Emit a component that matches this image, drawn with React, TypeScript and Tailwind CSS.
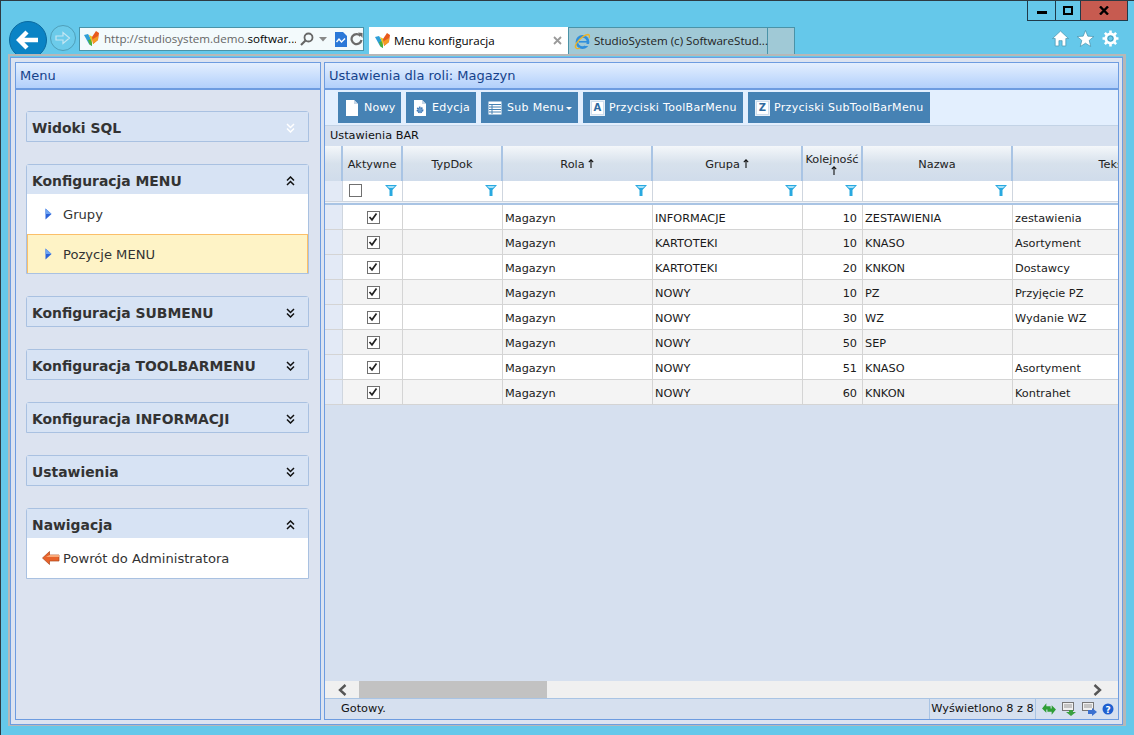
import React from "react";

const F = "font-['DejaVu_Sans','Liberation_Sans',sans-serif]";

function Logo({ s = 16 }: { s?: number }) {
  return (
    <svg width={s} height={s} viewBox="0 0 16 16" className="shrink-0">
      <path d="M0 4 L4 3 L7 8 L8 15 L5 13 Z" fill="#2f9fd8" />
      <path d="M4 9 L8 8 L8 15 L5.5 13.5 Z" fill="#4caf3c" />
      <path d="M5 4 L9 6 L8 12 Z" fill="#e9c320" />
      <path d="M8 6 L12 0 L15 2 L14 9 L9 13 Z" fill="#e8591c" />
      <path d="M9 8 L14 5 L14 9 L9 13 Z" fill="#f59a23" />
    </svg>
  );
}

function IEIcon() {
  return (
    <svg width={17} height={17} viewBox="0 0 17 17" className="shrink-0">
      <circle cx="8.5" cy="9" r="5.6" fill="none" stroke="#2f8fdc" strokeWidth="2.6" />
      <rect x="5" y="8" width="8" height="1.6" fill="#2f8fdc" />
      <path d="M11 11 L15 11 L15 13 L11 13 Z" fill="#a0c7d6" />
      <path d="M2 14 C0 11 9 2 14 1.5 C16 1.5 15.5 4 15 5" fill="none" stroke="#eab32a" strokeWidth="1.3" />
      <path d="M1.5 12 C0.5 16 4 16 6 15" fill="none" stroke="#eab32a" strokeWidth="1.3" />
    </svg>
  );
}

function Filter() {
  return (
    <svg width={12} height={11} viewBox="0 0 12 11" className="shrink-0 mb-[2px]">
      <path d="M0 0 H12 L7.5 5 V11 H4.5 V5 Z" fill="#29a9e0" />
      <path d="M2 1 H10 L8 3 H4 Z" fill="#a5e0f7" />
    </svg>
  );
}

function SortUp() {
  return (
    <svg width={6} height={9} viewBox="0 0 6 9" className="inline-block ml-[3px] align-baseline">
      <path d="M3 9 V1 M0.8 3.2 L3 0.8 L5.2 3.2" stroke="#111" strokeWidth="1.1" fill="none" />
    </svg>
  );
}

function Chevrons({ up, color = "#111" }: { up?: boolean; color?: string }) {
  return (
    <svg width={9} height={10} viewBox="0 0 9 10" className="shrink-0 mt-[2px]">
      <path
        d={up ? "M1 4.5 L4.5 1 L8 4.5 M1 9 L4.5 5.5 L8 9" : "M1 1 L4.5 4.5 L8 1 M1 5.5 L4.5 9 L8 5.5"}
        stroke={color}
        strokeWidth="1.5"
        fill="none"
      />
    </svg>
  );
}

function Check({ on }: { on: boolean }) {
  return (
    <span className="w-[13px] h-[13px] border border-[#707070] bg-white flex items-center justify-center shrink-0">
      {on && (
        <svg width={10} height={10} viewBox="0 0 10 10">
          <path d="M1.5 5 L4 7.8 L8.5 1.5" stroke="#222" strokeWidth="1.7" fill="none" />
        </svg>
      )}
    </span>
  );
}

function Tri() {
  return (
    <svg width={7} height={12} viewBox="0 0 7 12" className="shrink-0">
      <path d="M0.5 0.5 L6.5 6 L0.5 11.5 Z" fill="#2a62d8" />
      <path d="M0.5 0.5 L6.5 6 L0.5 6 Z" fill="#6fa4f2" />
    </svg>
  );
}

function AccHeader({ title, up, faint }: { title: string; up?: boolean; faint?: boolean }) {
  return (
    <div className="h-[29px] flex items-center justify-between pl-[5px] pr-[13px] bg-[#d7e3f4]">
      <span className="text-[13.9px] font-bold text-[#333] leading-none pt-[5px]">{title}</span>
      <Chevrons up={up} color={faint ? "#ffffff" : "#111"} />
    </div>
  );
}

function Acc({ title, up, faint, children, gap = true }: { title: string; up?: boolean; faint?: boolean; children?: React.ReactNode; gap?: boolean }) {
  return (
    <div className={`border border-[#a9c1e1] rounded-t-[3px] w-[283px] ${gap ? "mb-[22px]" : ""}`}>
      <AccHeader title={title} up={up} faint={faint} />
      {children}
    </div>
  );
}

function PanelHead({ text }: { text: string }) {
  return (
    <div className="h-[27px] shrink-0 border-b-2 border-[#6d9ce0] bg-gradient-to-b from-[#e4effe] to-[#b2d0fb] flex items-center pl-[4px] pt-[1px] text-[13px] text-[#15428b]">
      {text}
    </div>
  );
}

function DocIcon({ gear }: { gear?: boolean }) {
  return (
    <svg width={14} height={16} viewBox="0 0 14 16" className="shrink-0">
      <path d="M1 0 H9 L13 4 V16 H1 Z" fill="#fff" />
      <path d="M9 0 L13 4 H9 Z" fill="#c6d6e6" />
      {gear && <circle cx="7" cy="10" r="2.6" fill="#6f9fcf" stroke="#3f77b5" strokeWidth="1.6" strokeDasharray="1.4 0.8" />}
    </svg>
  );
}

function ListIcon() {
  return (
    <svg width={14} height={14} viewBox="0 0 14 14" className="shrink-0">
      <rect x="0.5" y="0.5" width="13" height="13" fill="#fff" />
      <path d="M1 3.5 H13 M1 6 H13 M1 8.5 H13 M1 11 H13 M4 3 V13" stroke="#4682b4" strokeWidth="1" />
    </svg>
  );
}

function LetterIcon({ l }: { l: string }) {
  return (
    <span className="w-[15px] h-[16px] border border-[#e8f0f8] bg-[#cfdeed] p-[1px] shrink-0 -mr-[1px]">
      <span className="w-full h-full bg-white text-[#2f6aa0] font-bold text-[10px] flex items-center justify-center leading-none">{l}</span>
    </span>
  );
}

function Btn({ w, icon, children }: { w: string; icon: React.ReactNode; children: React.ReactNode }) {
  return (
    <div className={`${w} h-[31px] bg-[#4682b4] text-white text-[11px] flex items-center pl-[7px] gap-[5px] tracking-[0.3px] shrink-0`}>
      {icon}
      <span className="flex items-center whitespace-nowrap pt-[1px]">{children}</span>
    </div>
  );
}

const cols = ["w-[60px]", "w-[100px]", "w-[150px]", "w-[150px]", "w-[60px]", "w-[150px]", "w-[202px]"];

const rows: [string, string, string, string][] = [
  ["INFORMACJE", "10", "ZESTAWIENIA", "zestawienia"],
  ["KARTOTEKI", "10", "KNASO", "Asortyment"],
  ["KARTOTEKI", "20", "KNKON", "Dostawcy"],
  ["NOWY", "10", "PZ", "Przyjęcie PZ"],
  ["NOWY", "30", "WZ", "Wydanie WZ"],
  ["NOWY", "50", "SEP", ""],
  ["NOWY", "51", "KNASO", "Asortyment"],
  ["NOWY", "60", "KNKON", "Kontrahet"],
];

function HeadCell({ w, children }: { w: string; children: React.ReactNode }) {
  return (
    <div className={`${w} shrink-0 border-r-2 border-[#a9c4e4] flex items-center justify-center text-center leading-[13px] pt-[1px] px-[2px] whitespace-nowrap overflow-hidden`}>
      {children}
    </div>
  );
}

function FilterCell({ w, children }: { w: string; children?: React.ReactNode }) {
  return (
    <div className={`${w} shrink-0 border-r border-[#cfd6df] flex items-center justify-end pr-[5px]`}>
      {children}
      <Filter />
    </div>
  );
}

function Cell({ w, right, children }: { w: string; right?: boolean; children?: React.ReactNode }) {
  return (
    <div className={`${w} shrink-0 border-r border-[#d4d4d4] flex items-center pt-[5px] px-[2px] whitespace-nowrap overflow-hidden ${right ? "justify-end pr-[5px]" : ""}`}>
      {children}
    </div>
  );
}

export default function App() {
  return (
    <div className={`w-[1134px] h-[735px] bg-[#65c8ea] border-t border-[#2d3a42] border-l border-l-[#2d3a42] flex flex-col overflow-hidden ${F}`}>
      {/* caption */}
      <div className="h-[20px] shrink-0 flex justify-end pr-[6px]">
        <div className="flex h-[20px] w-[101px] border border-t-0 border-[#1f3a4a] text-black">
          <div className="w-[28px] border-r border-[#1f3a4a] flex items-end justify-center pb-[6px]">
            <span className="w-[10px] h-[3px] bg-black" />
          </div>
          <div className="w-[25px] border-r border-[#1f3a4a] flex items-center justify-center">
            <span className="w-[10px] h-[9px] border-2 border-black" />
          </div>
          <div className="flex-1 bg-[#c75b50] flex items-center justify-center">
            <svg width={10} height={9} viewBox="0 0 10 9"><path d="M1 0.5 L9 8.5 M9 0.5 L1 8.5" stroke="#000" strokeWidth="2.4" /></svg>
          </div>
        </div>
      </div>
      {/* nav */}
      <div className="h-[33px] shrink-0 flex items-end pl-[8px] overflow-hidden">
        <div className="w-[38px] h-[38px] rounded-full bg-[#0a83c5] flex items-center justify-center shrink-0 mb-[-5px] border border-[#0a6aa0]">
          <svg width={24} height={20} viewBox="0 0 24 20"><path d="M22 10 H4 M11 2 L3 10 L11 18" stroke="#fff" strokeWidth="4.4" fill="none" /></svg>
        </div>
        <div className="w-[26px] h-[26px] rounded-full border border-[#4f9fb9] ml-[3px] mb-[3px] flex items-center justify-center shrink-0 bg-[#6ccbea]">
          <svg width={16} height={14} viewBox="0 0 16 14"><path d="M1 5 H8 V1.5 L14.5 7 L8 12.5 V9 H1 Z" stroke="#c3e6f2" strokeWidth="1.2" fill="none" /></svg>
        </div>
        <div className="w-[285px] h-[24px] ml-[3px] mb-[3px] bg-[#f3fafc] border border-[#4a93a8] flex items-center pl-[4px] gap-[4px] shrink-0 font-['Open_Sans',sans-serif] text-[11.6px]">
          <Logo />
          <span className="text-[#666] whitespace-nowrap w-[195px] overflow-hidden">http://studiosystem.demo.<span className="text-black">softwar...</span></span>
          <svg width={14} height={14} viewBox="0 0 14 14" className="shrink-0"><circle cx="8.5" cy="5.5" r="4" fill="none" stroke="#666" strokeWidth="1.8" /><path d="M5.5 8.5 L1 13" stroke="#666" strokeWidth="2.2" /></svg>
          <svg width={8} height={5} viewBox="0 0 8 5" className="ml-[1px] shrink-0"><path d="M0 0 H8 L4 4.5 Z" fill="#888" /></svg>
          <svg width={14} height={15} viewBox="0 0 14 15" className="ml-[3px] shrink-0"><path d="M1 0 H9 L13 4 V15 H1 Z" fill="#2b78d8" /><path d="M2.5 10 L5 7 L7.5 10 L11 6.5" stroke="#fff" strokeWidth="1.4" fill="none" /></svg>
          <svg width={13} height={14} viewBox="0 0 13 14" className="shrink-0 -ml-[2px]"><path d="M10.5 4 A5 5 0 1 0 11.5 8" stroke="#6a6a6a" strokeWidth="2.2" fill="none" /><path d="M8 0.5 L12.5 1 V6 Z" fill="#6a6a6a" /></svg>
        </div>
        <div className="w-[199px] h-[27px] ml-[5px] bg-white flex items-center pl-[6px] gap-[3px] shrink-0 font-['Open_Sans',sans-serif] text-[11.6px] text-black">
          <Logo />
          <span className="whitespace-nowrap flex-1">Menu konfiguracja</span>
          <svg width={9} height={9} viewBox="0 0 9 9" className="mr-[6px] shrink-0"><path d="M1 1 L8 8 M8 1 L1 8" stroke="#9a9a9a" strokeWidth="1.8" /></svg>
        </div>
        <div className="w-[200px] h-[27px] bg-[#a0c9d6] border-t border-x border-[#4a93a8] flex items-center pl-[5px] gap-[3px] shrink-0 font-['Open_Sans',sans-serif] text-[11.6px] text-[#222]">
          <IEIcon />
          <span className="whitespace-nowrap">StudioSystem (c) SoftwareStud...</span>
        </div>
        <div className="w-[27px] h-[27px] bg-[#a0c9d6] border-t border-r border-[#4a93a8] shrink-0" />
        <div className="flex-1 flex items-center justify-end gap-[8px] pr-[15px] pb-[7px]">
          <svg width={17} height={17} viewBox="0 0 16 16"><path d="M8 1 L15.5 8 H13 V15 H9.5 V10 H6.5 V15 H3 V8 H0.5 Z" fill="#fff" stroke="#3d8aa5" strokeWidth="0.6" /></svg>
          <svg width={17} height={17} viewBox="0 0 16 16"><path d="M8 0.5 L10.2 5.8 L15.8 6.2 L11.5 9.8 L12.9 15.5 L8 12.4 L3.1 15.5 L4.5 9.8 L0.2 6.2 L5.8 5.8 Z" fill="#fff" stroke="#3d8aa5" strokeWidth="0.6" /></svg>
          <svg width={17} height={17} viewBox="0 0 16 16"><circle cx="8" cy="8" r="4.4" fill="none" stroke="#fff" strokeWidth="2.6" /><circle cx="8" cy="8" r="2.4" fill="none" stroke="#3d8aa5" strokeWidth="0.7" /><path d="M8 0.5 V3.5 M8 12.5 V15.5 M0.5 8 H3.5 M12.5 8 H15.5 M2.7 2.7 L4.8 4.8 M11.2 11.2 L13.3 13.3 M13.3 2.7 L11.2 4.8 M4.8 11.2 L2.7 13.3" stroke="#fff" strokeWidth="2.4" /></svg>
        </div>
      </div>

      {/* frame */}
      <div className="w-[1118px] h-[672px] ml-[7px] border-2 border-[#b7b7b7] border-r-[3px] shrink-0">
        <div className="w-full h-[668px] mt-[1px] border border-[#6d9ce0] bg-[#dce3f0] flex pt-[4px] pl-[4px] pr-[3px] gap-[3px]">
          {/* left */}
          <div className="w-[306px] h-[658px] border border-[#6d9ce0] bg-[#dce3f0] flex flex-col shrink-0">
            <PanelHead text="Menu" />
            <div className="pt-[21px] pl-[10px]">
              <Acc title="Widoki SQL" faint />
              <Acc title="Konfiguracja MENU" up>
                <div className="h-[40px] bg-white flex items-center pl-[18px] gap-[11px] text-[13.1px] text-[#333]">
                  <Tri />
                  <span className="pt-[1px]">Grupy</span>
                </div>
                <div className="h-[39px] bg-[#fef3c6] border border-[#fbbf69] border-b-0 flex items-center pl-[17px] gap-[11px] text-[13.1px] text-[#333]">
                  <Tri />
                  <span className="pt-[2px]">Pozycje MENU</span>
                </div>
              </Acc>
              <Acc title="Konfiguracja SUBMENU" />
              <Acc title="Konfiguracja TOOLBARMENU" />
              <Acc title="Konfiguracja INFORMACJI" />
              <Acc title="Ustawienia" />
              <Acc title="Nawigacja" up gap={false}>
                <div className="h-[40px] bg-white flex items-center pl-[15px] gap-[3px] text-[13.1px] text-[#333]">
                  <svg width={18} height={14} viewBox="0 0 18 14" className="shrink-0"><path d="M0.5 7 L7.5 0.5 V4 H17 V10 H7.5 V13.5 Z" fill="#e8622a" stroke="#a9481c" strokeWidth="0.7" /><path d="M7.5 4 H17 V6 H4 Z" fill="#f8a878" /></svg>
                  <span className="pt-[2px]">Powrót do Administratora</span>
                </div>
              </Acc>
            </div>
          </div>
          {/* right */}
          <div className="flex-1 h-[658px] border border-[#6d9ce0] bg-[#d6e0ef] flex flex-col min-w-0 overflow-hidden text-[11.3px] text-[#222]">
            <PanelHead text="Ustawienia dla roli: Magazyn" />
            <div className="h-[36px] shrink-0 bg-[#e3effe] border-b border-[#c3d3e6] flex items-center pl-[13px] gap-[5px]">
              <Btn w="w-[63px]" icon={<DocIcon />}>Nowy</Btn>
              <Btn w="w-[70px]" icon={<DocIcon gear />}>Edycja</Btn>
              <Btn w="w-[97px]" icon={<ListIcon />}>Sub Menu<svg width={6} height={3} viewBox="0 0 6 3" className="ml-[2px]"><path d="M0 0 H6 L3 3 Z" fill="#fff" /></svg></Btn>
              <Btn w="w-[160px]" icon={<LetterIcon l="A" />}>Przyciski ToolBarMenu</Btn>
              <Btn w="w-[182px]" icon={<LetterIcon l="Z" />}>Przyciski SubToolBarMenu</Btn>
            </div>
            <div className="h-[20px] shrink-0 flex items-center pl-[5px] text-[11.3px] text-[#111]">Ustawienia BAR</div>
            {/* grid */}
            <div className="flex-1 min-h-0 flex flex-col overflow-hidden">
              <div className="h-[35px] shrink-0 flex bg-gradient-to-b from-[#f4f7fa] via-[#d7e1ec] to-[#d0dceb]">
                <div className="w-[18px] shrink-0 border-r-2 border-[#a9c4e4]" />
                <HeadCell w={cols[0]}>Aktywne</HeadCell>
                <HeadCell w={cols[1]}>TypDok</HeadCell>
                <HeadCell w={cols[2]}><span>Rola<SortUp /></span></HeadCell>
                <HeadCell w={cols[3]}><span>Grupa<SortUp /></span></HeadCell>
                <HeadCell w={cols[4]}><span className="flex flex-col items-center">Kolejność<SortUp /></span></HeadCell>
                <HeadCell w={cols[5]}>Nazwa</HeadCell>
                <HeadCell w={cols[6]}>Tekst</HeadCell>
              </div>
              <div className="h-[21px] shrink-0 flex bg-white border-b border-[#cfd6df]">
                <div className="w-[18px] shrink-0 bg-[#e3eaf6] border-r border-[#cfd6df]" />
                <FilterCell w={cols[0]}><span className="mr-auto ml-[6px] mb-[2px]"><Check on={false} /></span></FilterCell>
                <FilterCell w={cols[1]} />
                <FilterCell w={cols[2]} />
                <FilterCell w={cols[3]} />
                <FilterCell w={cols[4]} />
                <FilterCell w={cols[5]} />
                <div className={`${cols[6]} shrink-0`} />
              </div>
              <div className="h-[3px] shrink-0 bg-[#eef2f8] border-b-2 border-[#a9c4e4]" />
              {rows.map((r, i) => (
                <div key={i} className={`h-[25px] shrink-0 flex border-b border-[#d4d4d4] text-[#1a1a1a] ${i % 2 ? "bg-[#f4f4f4]" : "bg-white"}`}>
                  <div className="w-[18px] shrink-0 bg-[#e3eaf6] border-r border-[#cfd6df]" />
                  <Cell w={`${cols[0]} justify-center`}><span className="-mt-[5px] ml-[1px]"><Check on /></span></Cell>
                  <Cell w={cols[1]} />
                  <Cell w={cols[2]}>Magazyn</Cell>
                  <Cell w={cols[3]}>{r[0]}</Cell>
                  <Cell w={cols[4]} right>{r[1]}</Cell>
                  <Cell w={cols[5]}>{r[2]}</Cell>
                  <Cell w={cols[6]}>{r[3]}</Cell>
                </div>
              ))}
              <div className="flex-1" />
              <div className="h-[17px] shrink-0 bg-[#f0f0f0] flex items-center">
                <div className="w-[34px] shrink-0 flex items-center justify-center">
                  <svg width={9} height={12} viewBox="0 0 9 12"><path d="M7.5 1 L2 6 L7.5 11" stroke="#555" strokeWidth="2.4" fill="none" /></svg>
                </div>
                <div className="w-[188px] h-[17px] bg-[#c2c2c2] shrink-0" />
                <div className="flex-1 flex justify-end pr-[16px]">
                  <svg width={9} height={12} viewBox="0 0 9 12"><path d="M1.5 1 L7 6 L1.5 11" stroke="#555" strokeWidth="2.4" fill="none" /></svg>
                </div>
              </div>
            </div>
            <div className="h-[21px] shrink-0 flex items-center bg-[#d6e0ef] border-t border-[#a9c4e4] text-[#111]">
              <span className="ml-[16px] flex-1">Gotowy.</span>
              <span className="border-x border-[#a9c4e4] w-[107px] h-full flex items-center justify-center whitespace-nowrap">Wyświetlono 8 z 8</span>
              <div className="w-[82px] flex items-center gap-[5px] pl-[5px]">
                <svg width={16} height={14} viewBox="0 0 15 13"><path d="M1 6 L5 1 L5 4 H9 V7 H5 V10 Z" fill="#2f9e36" /><path d="M14 7 L10 12 L10 9 H6 V6 H10 V3 Z" fill="#2f9e36" /></svg>
                <svg width={15} height={14} viewBox="0 0 15 14"><rect x="0.5" y="0.5" width="11" height="8" fill="#f0f0f0" stroke="#777" /><path d="M2 3 H10 M2 5 H10" stroke="#999" /><path d="M7 8 H11 V10 H14 L9 14 L4 10 H7 Z" fill="#3aa040" /></svg>
                <svg width={15} height={14} viewBox="0 0 15 14"><rect x="0.5" y="0.5" width="11" height="8" fill="#f0f0f0" stroke="#777" /><path d="M2 3 H10 M2 5 H10" stroke="#999" /><path d="M6 8 H10 V6 L15 10 L10 14 V12 H6 Z" fill="#3a70d0" /></svg>
                <svg width={12} height={12} viewBox="0 0 12 12"><circle cx="6" cy="6" r="5.5" fill="#1f5fd0" /><text x="6" y="9.5" textAnchor="middle" fontSize="9" fontWeight="bold" fill="#fff">?</text></svg>
              </div>
            </div>
          </div>
        </div>
      </div>
    </div>
  );
}
